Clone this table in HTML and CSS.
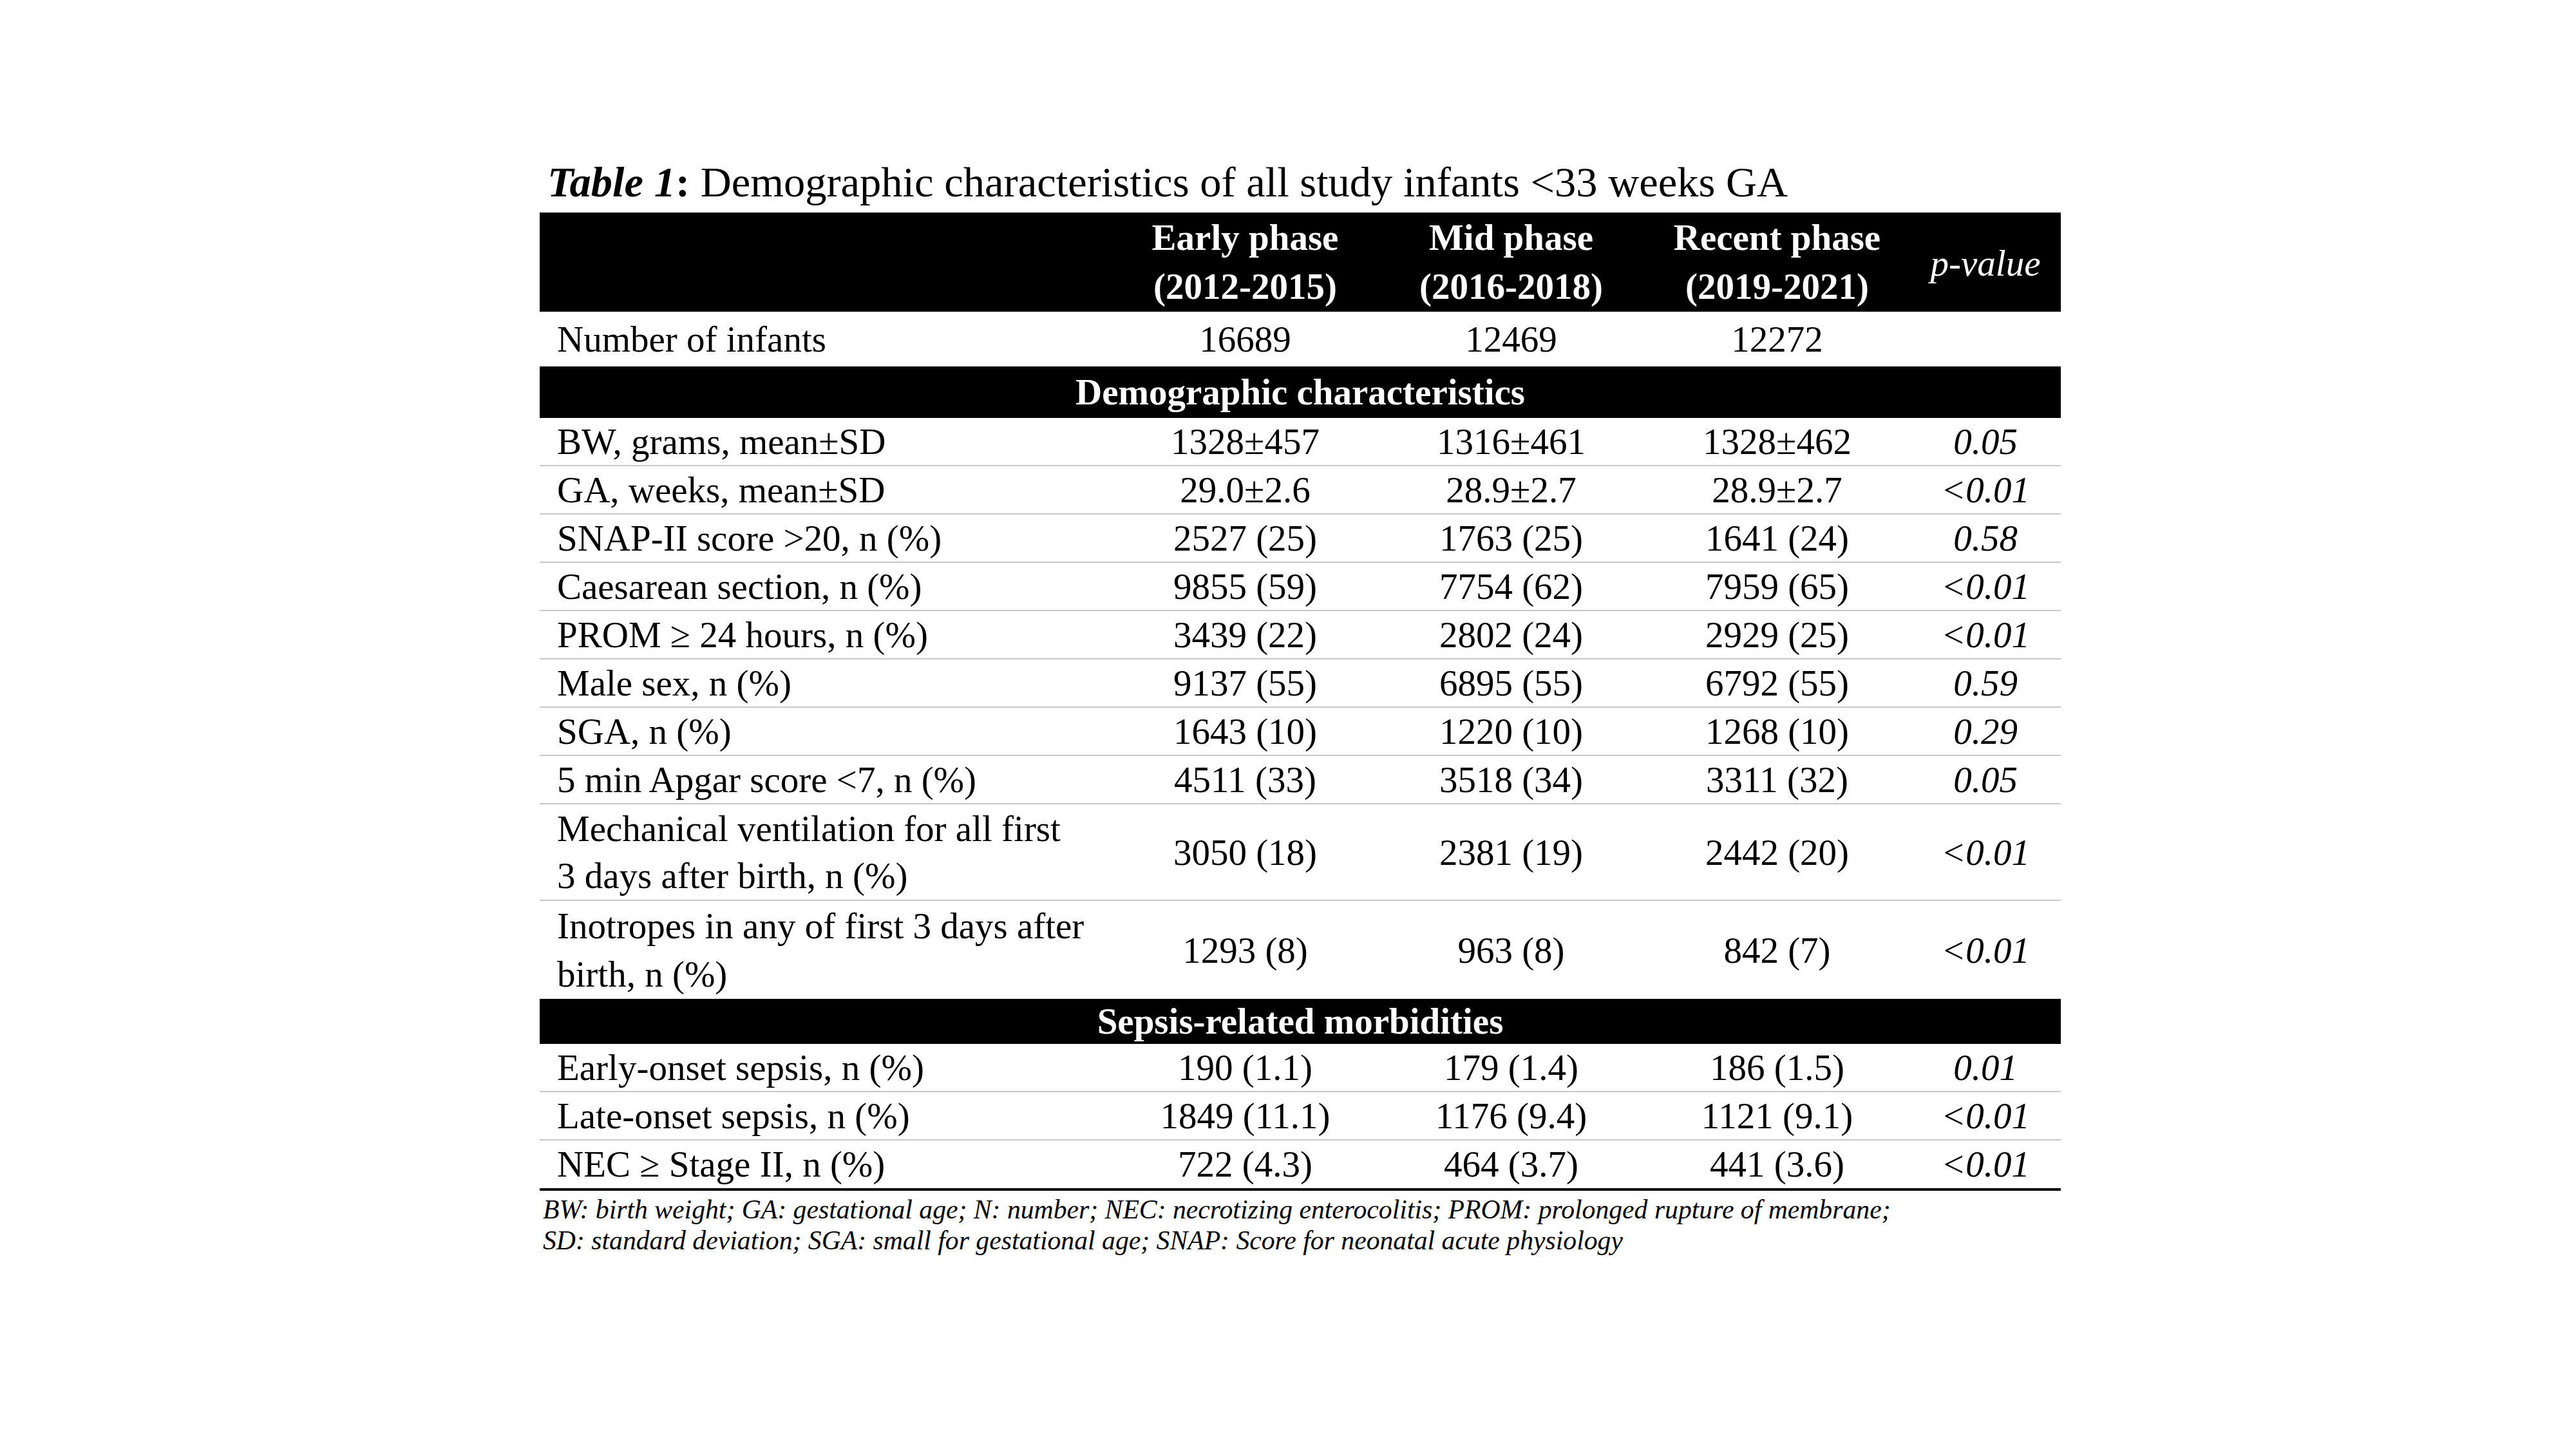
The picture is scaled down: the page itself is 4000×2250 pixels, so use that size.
FILE: index.html
```html
<!DOCTYPE html>
<html lang="en">
<head>
<meta charset="utf-8">
<title>Table 1</title>
<link rel="stylesheet" href="styles.css">
</head>
<body>
<div class="page">
  <div class="caption"><b><i>Table 1</i>:</b> Demographic characteristics of all study infants &lt;33 weeks GA</div>
  <table class="data">
    <colgroup>
      <col class="c-label">
      <col class="c-num">
      <col class="c-num">
      <col class="c-num">
      <col class="c-p">
    </colgroup>
    <thead>
      <tr class="head">
        <th></th>
        <th>Early phase<br>(2012-2015)</th>
        <th>Mid phase<br>(2016-2018)</th>
        <th>Recent phase<br>(2019-2021)</th>
        <th class="pval-head">p-value</th>
      </tr>
    </thead>
    <tbody>
      <tr class="count">
        <td class="label">Number of infants</td>
        <td>16689</td>
        <td>12469</td>
        <td>12272</td>
        <td></td>
      </tr>
      <tr class="band band-demo"><td colspan="5">Demographic characteristics</td></tr>
      <tr class="row">
        <td class="label">BW, grams, mean±SD</td>
        <td>1328±457</td><td>1316±461</td><td>1328±462</td><td class="p">0.05</td>
      </tr>
      <tr class="row">
        <td class="label">GA, weeks, mean±SD</td>
        <td>29.0±2.6</td><td>28.9±2.7</td><td>28.9±2.7</td><td class="p">&lt;0.01</td>
      </tr>
      <tr class="row">
        <td class="label">SNAP-II score &gt;20, n (%)</td>
        <td>2527 (25)</td><td>1763 (25)</td><td>1641 (24)</td><td class="p">0.58</td>
      </tr>
      <tr class="row">
        <td class="label">Caesarean section, n (%)</td>
        <td>9855 (59)</td><td>7754 (62)</td><td>7959 (65)</td><td class="p">&lt;0.01</td>
      </tr>
      <tr class="row">
        <td class="label">PROM ≥ 24 hours, n (%)</td>
        <td>3439 (22)</td><td>2802 (24)</td><td>2929 (25)</td><td class="p">&lt;0.01</td>
      </tr>
      <tr class="row">
        <td class="label">Male sex, n (%)</td>
        <td>9137 (55)</td><td>6895 (55)</td><td>6792 (55)</td><td class="p">0.59</td>
      </tr>
      <tr class="row">
        <td class="label">SGA, n (%)</td>
        <td>1643 (10)</td><td>1220 (10)</td><td>1268 (10)</td><td class="p">0.29</td>
      </tr>
      <tr class="row">
        <td class="label">5 min Apgar score &lt;7, n (%)</td>
        <td>4511 (33)</td><td>3518 (34)</td><td>3311 (32)</td><td class="p">0.05</td>
      </tr>
      <tr class="row tall">
        <td class="label">Mechanical ventilation for all first<br>3 days after birth, n (%)</td>
        <td>3050 (18)</td><td>2381 (19)</td><td>2442 (20)</td><td class="p">&lt;0.01</td>
      </tr>
      <tr class="row tall last-in-section">
        <td class="label">Inotropes in any of first 3 days after<br>birth, n (%)</td>
        <td>1293 (8)</td><td>963 (8)</td><td>842 (7)</td><td class="p">&lt;0.01</td>
      </tr>
      <tr class="band band-sepsis"><td colspan="5">Sepsis-related morbidities</td></tr>
      <tr class="row">
        <td class="label">Early-onset sepsis, n (%)</td>
        <td>190 (1.1)</td><td>179 (1.4)</td><td>186 (1.5)</td><td class="p">0.01</td>
      </tr>
      <tr class="row">
        <td class="label">Late-onset sepsis, n (%)</td>
        <td>1849 (11.1)</td><td>1176 (9.4)</td><td>1121 (9.1)</td><td class="p">&lt;0.01</td>
      </tr>
      <tr class="row final">
        <td class="label">NEC ≥ Stage II, n (%)</td>
        <td>722 (4.3)</td><td>464 (3.7)</td><td>441 (3.6)</td><td class="p">&lt;0.01</td>
      </tr>
    </tbody>
  </table>
  <div class="footnote">BW: birth weight; GA: gestational age; N: number; NEC: necrotizing enterocolitis; PROM: prolonged rupture of membrane;<br>SD: standard deviation; SGA: small for gestational age; SNAP: Score for neonatal acute physiology</div>
</div>
</body>
</html>
```

FILE: styles.css
```css
html, body {
  margin: 0;
  padding: 0;
  background: #ffffff;
}

body {
  font-family: "Liberation Serif", "Times New Roman", serif;
  color: #000000;
}

.page {
  padding: 244px 0 0 838px;
}

.caption {
  font-size: 66.5px;
  line-height: 78px;
  padding-left: 12px;
  margin-bottom: 8px;
  white-space: nowrap;
}

.data {
  width: 2362px;
  border-collapse: separate;
  border-spacing: 0;
  table-layout: fixed;
  font-size: 57px;
}

.c-label { width: 889px; }
.c-num { width: 413px; }
.c-p { width: 234px; }

.data th,
.data td {
  padding-top: 0;
  padding-bottom: 0;
  padding-left: 0;
  padding-right: 0;
  text-align: center;
  vertical-align: middle;
  white-space: nowrap;
}

.head th {
  background: #000000;
  color: #ffffff;
  font-weight: bold;
  line-height: 76px;
  padding-top: 1px;
  padding-bottom: 1px;
}

.head th.pval-head {
  font-weight: normal;
  font-style: italic;
  padding-top: 4px;
}

.count td {
  line-height: 85px;
}

.band td {
  background: #000000;
  color: #ffffff;
  font-weight: bold;
  text-align: center;
}

.band-demo td { line-height: 80px; }
.band-sepsis td { line-height: 70px; }

.row td {
  line-height: 73px;
  border-bottom: 2px solid #c8c8c8;
}

.row.tall td {
  padding-top: 1px;
  padding-bottom: 1px;
}

.row.last-in-section td {
  border-bottom: none;
  line-height: 75px;
}

.row.final td {
  border-bottom: 4px solid #000000;
  line-height: 74px;
}

.data td.label {
  text-align: left;
  padding-left: 27px;
}

.data td.p {
  font-style: italic;
}

.footnote {
  font-size: 41.7px;
  line-height: 48px;
  font-style: italic;
  padding-left: 5px;
  margin-top: 5px;
  white-space: nowrap;
}
```
